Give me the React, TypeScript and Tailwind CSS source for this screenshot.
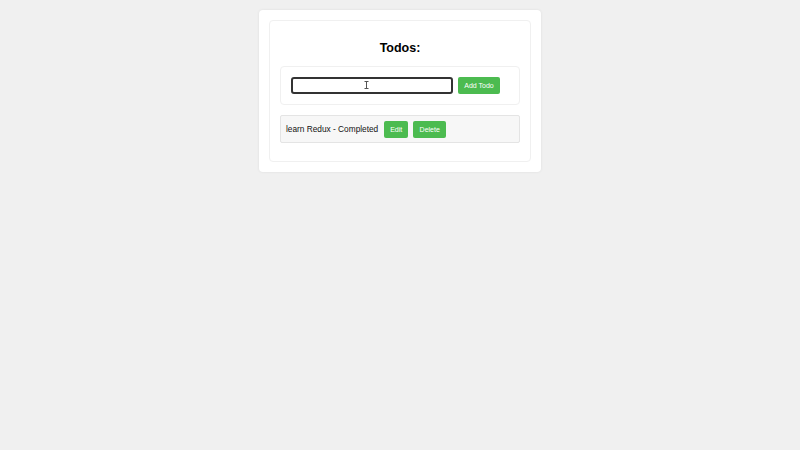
import React from "react";

export default function App() {
  const font = { fontFamily: '"Liberation Sans", Arial, sans-serif' };
  return (
    <div className="w-[800px] h-[450px] bg-[#f0f0f0] flex justify-center" style={font}>
      <div className="mt-[10px] w-[282px] h-[162px] bg-white rounded-[4px] shadow-[0_0_3px_rgba(0,0,0,0.08)] p-[10px]">
        <div className="h-[142px] bg-white rounded-[4px] border border-[#f0f0f0] px-[10px] pt-[10px] flex flex-col">
          <h2 className="text-[12.5px] font-bold text-black text-center leading-[15px] mt-[10px] mb-[10px]">Todos:</h2>
          <div className="h-[39px] border border-[#f0f0f0] rounded-[4px] flex items-center px-[10px]">
            <div className="relative w-[162px] h-[17px] border-2 border-[#333] rounded-[3px] bg-white">
              <svg className="absolute left-[71px] top-[2px]" width="5" height="8" viewBox="0 0 5 8">
                <path d="M0.5 0.5h4M2.5 0.5v7M0.5 7.5h4" stroke="#555" strokeWidth="1" fill="none" />
              </svg>
            </div>
            <button className="ml-[5px] w-[42px] h-[17px] bg-[#4cbb50] text-white text-[7px] rounded-[2px] leading-none">Add Todo</button>
          </div>
          <div className="mt-[10px] h-[28px] bg-[#f7f7f7] border border-[#e4e4e4] rounded-[2px] flex items-center pl-[5px]">
            <span className="text-[8.3px] text-[#111]">learn Redux - Completed</span>
            <button className="ml-[6px] w-[24px] h-[17px] bg-[#4cbb50] text-white text-[7px] rounded-[2px] leading-none">Edit</button>
            <button className="ml-[5px] w-[33px] h-[17px] bg-[#4cbb50] text-white text-[7px] rounded-[2px] leading-none">Delete</button>
          </div>
        </div>
      </div>
    </div>
  );
}
